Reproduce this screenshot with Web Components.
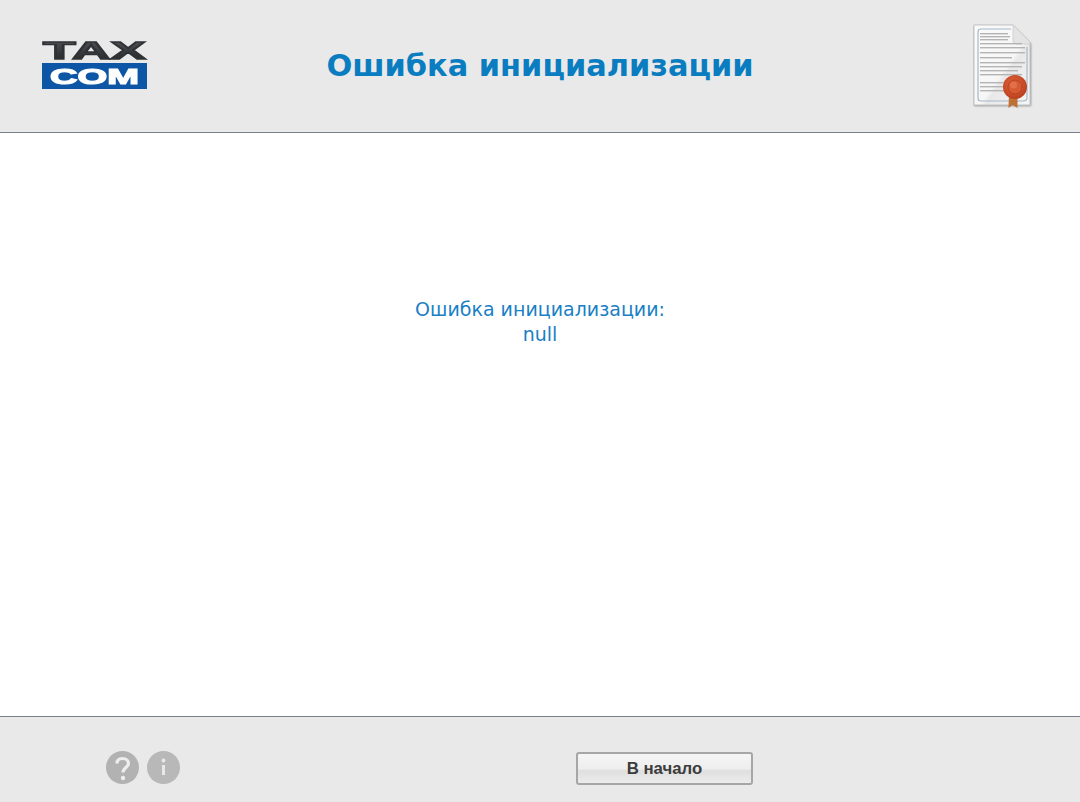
<!DOCTYPE html>
<html lang="ru">
<head>
<meta charset="utf-8">
<title>Ошибка инициализации</title>
<style>
html, body { margin: 0; height: 100%; }
body { font-family: "DejaVu Sans", sans-serif; }
</style>
</head>
<body>
<app-screen>
  <tax-logo slot="logo"></tax-logo>
  <span slot="title">Ошибка инициализации</span>
  <cert-icon slot="icon"></cert-icon>
  <span>Ошибка инициализации:<br>null</span>
  <help-icons slot="tools"></help-icons>
  <nav-button slot="action">В начало</nav-button>
</app-screen>

<script>
const screen_template = document.createElement('template');
screen_template.innerHTML = `
<style>
:host{
  display: flex;
  flex-direction: column;
  height: 802px;
  width: 1080px;
  background: #fff;
}
header{
  height: 132px;
  flex: none;
  background: #e9e9e9;
  border-bottom: 1px solid #77808c;
  display: grid;
  grid-template-columns: 1fr auto 1fr;
  align-items: center;
}
#logo{ padding-left: 42px; display: flex; }
#title{
  font: bold 30.4px "DejaVu Sans", sans-serif;
  color: #0a7dc1;
  position: relative;
  top: -1px;
}
#icon{ justify-self: end; padding-right: 47px; display: flex; }
main{
  flex: 1;
  display: flex;
  align-items: center;
  justify-content: center;
  text-align: center;
  font: 19px/25px "DejaVu Sans", sans-serif;
  color: #1a80c4;
  padding-bottom: 205px;
}
footer{
  height: 85px;
  flex: none;
  box-sizing: content-box;
  background: #e9e9e9;
  border-top: 1px solid #77808c;
  display: flex;
  align-items: center;
  padding-left: 106px;
}
#tools{ display: flex; padding-top: 16px; }
#action{ margin-left: 396px; display: flex; padding-top: 18px; }
</style>
<header>
  <div id="logo"><slot name="logo"></slot></div>
  <div id="title"><slot name="title"></slot></div>
  <div id="icon"><slot name="icon"></slot></div>
</header>
<main><slot></slot></main>
<footer>
  <div id="tools"><slot name="tools"></slot></div>
  <div id="action"><slot name="action"></slot></div>
</footer>`;

class AppScreen extends HTMLElement{
  constructor(){
    super();
    this.attachShadow({mode:"open"});
    this.shadowRoot.appendChild(screen_template.content.cloneNode(true));
  }
}

const logo_template = document.createElement('template');
logo_template.innerHTML = `
<style>
:host{ display: block; width: 106px; height: 62px; }
svg{ display: block; }
text{ font-family: "Liberation Sans", sans-serif; font-weight: bold; }
</style>
<svg width="106" height="62" viewBox="0 -6 106 62">
  <defs>
    <linearGradient id="tax" x1="0" y1="0" x2="0" y2="1">
      <stop offset="0" stop-color="#55585c"/>
      <stop offset="1" stop-color="#222427"/>
    </linearGradient>
    <filter id="soft"><feGaussianBlur stdDeviation="0.45"/></filter>
  </defs>
  <g filter="url(#soft)">
    <text x="1" y="17.500" font-size="24.500" textLength="103" lengthAdjust="spacingAndGlyphs" fill="url(#tax)" stroke="#2f3235" stroke-width="1.300">TAX</text>
    <rect x="0" y="22" width="105" height="26" fill="#0a56a6"/>
    <text x="8" y="43" font-size="22" textLength="89" lengthAdjust="spacingAndGlyphs" fill="#fff" stroke="#fff" stroke-width="1.200">COM</text>
  </g>
</svg>`;

class TaxLogo extends HTMLElement{
  constructor(){
    super();
    this.attachShadow({mode:"open"});
    this.shadowRoot.appendChild(logo_template.content.cloneNode(true));
  }
}

const cert_template = document.createElement('template');
cert_template.innerHTML = `
<style>
:host{ display: block; width: 60px; height: 88px; }
svg{ display: block; }
</style>
<svg width="60" height="88" viewBox="-1 -3 60 88">
  <defs>
    <filter id="soft" x="-10%" y="-10%" width="120%" height="120%"><feGaussianBlur stdDeviation="0.5"/></filter>
    <filter id="shade" x="-10%" y="-10%" width="120%" height="120%"><feGaussianBlur stdDeviation="1.1"/></filter>
    <linearGradient id="paper" x1="0" y1="0" x2="1" y2="1">
      <stop offset="0" stop-color="#fbfbfb"/>
      <stop offset=".55" stop-color="#f6f6f6"/>
      <stop offset=".6" stop-color="#e8e8e8"/>
      <stop offset="1" stop-color="#f6f6f6"/>
    </linearGradient>
    <radialGradient id="seal" cx=".45" cy=".4" r=".6">
      <stop offset="0" stop-color="#e06a42"/>
      <stop offset=".7" stop-color="#c94c28"/>
      <stop offset="1" stop-color="#b84020"/>
    </radialGradient>
  </defs>
  <path d="M0 1 H39 L57 19 V81 H0 Z" fill="#8f8f8f" filter="url(#shade)"/>
  <g filter="url(#soft)">
    <path d="M0 0 H39 L56 17 V80 H0 Z" fill="url(#paper)" stroke="#c0c3c6"/>
    <path d="M37 4 H7 Q4 4 4 7 V73 Q4 76 7 76 H49 Q53 76 53 73 V22" fill="none" stroke="#a6b8c8" stroke-width="1.2"/>
    <path d="M39 0 L56 17 V19 H43 Q39 19 39 15 Z" fill="#e4e4e4" stroke="#cbcbcb" stroke-width=".8"/>
    <g fill="#b4b4b4">
      <rect x="6" y="8" width="28" height="1.400"/>
      <rect x="6" y="11" width="30" height="1.400"/>
      <rect x="6" y="14" width="28" height="1.400"/>
      <rect x="6" y="18" width="42" height="1.400"/>
      <rect x="6" y="22" width="45" height="1.400"/>
      <rect x="6" y="27" width="45" height="1.400"/>
      <rect x="6" y="32" width="32" height="1.400"/>
      <rect x="6" y="37" width="45" height="1.400"/>
      <rect x="6" y="41" width="42" height="1.400"/>
      <rect x="6" y="45" width="38" height="1.400"/>
      <rect x="6" y="49" width="42" height="1.400"/>
      <rect x="6" y="57" width="45" height="1.400"/>
      <rect x="6" y="61" width="28" height="1.400"/>
      <rect x="6" y="65" width="26" height="1.400"/>
    </g>
    <path d="M35 68 L34.500 83 L38.500 80 L43.500 83 L43.500 68 Z" fill="#bf6f36"/>
    <circle cx="41" cy="62" r="12" fill="url(#seal)"/>
    <circle cx="41" cy="62" r="7" fill="#d65a33" stroke="#b8431f"/>
    <circle cx="39.500" cy="60" r="3.500" fill="#e97f5c" opacity=".6"/>
  </g>
</svg>`;

class CertIcon extends HTMLElement{
  constructor(){
    super();
    this.attachShadow({mode:"open"});
    this.shadowRoot.appendChild(cert_template.content.cloneNode(true));
  }
}

const help_template = document.createElement('template');
help_template.innerHTML = `
<style>
:host{ display: flex; gap: 8px; }
svg{ display: block; }
</style>
<svg width="33" height="33" viewBox="0 0 33 33" role="img" aria-label="help">
  <defs><filter id="soft"><feGaussianBlur stdDeviation="0.4"/></filter></defs>
  <circle cx="16.500" cy="16.500" r="16.500" fill="#b2b2b2"/>
  <g filter="url(#soft)">
    <path d="M11 12.500 C11 9 13.500 7.500 16.500 7.500 C20 7.500 22.500 9.500 22.500 12.500 C22.500 16.500 17 16.500 17 21.500" fill="none" stroke="#eeeeee" stroke-width="3.200"/>
    <circle cx="17" cy="27" r="2.200" fill="#eeeeee"/>
  </g>
</svg>
<svg width="33" height="33" viewBox="0 0 33 33" role="img" aria-label="info">
  <circle cx="16.500" cy="16.500" r="16.500" fill="#b8b8b8"/>
  <g filter="url(#soft)">
    <circle cx="16.500" cy="9.500" r="1.900" fill="#e8e8e8"/>
    <path d="M16.500 14 V24" stroke="#e8e8e8" stroke-width="3"/>
  </g>
</svg>`;

class HelpIcons extends HTMLElement{
  constructor(){
    super();
    this.attachShadow({mode:"open"});
    this.shadowRoot.appendChild(help_template.content.cloneNode(true));
  }
}

const button_template = document.createElement('template');
button_template.innerHTML = `
<style>
:host{ display: block; }
button{
  display: block;
  width: 177px;
  height: 33px;
  box-sizing: border-box;
  padding: 0;
  border: 2px solid #a6a6a6;
  border-radius: 3px;
  background: linear-gradient(#f5f5f5 0%, #eeeeee 50%, #dfdfdf 58%, #ececec 100%);
  color: #3c3c3c;
  font: bold 16.800px "Liberation Sans", sans-serif;
}
</style>
<button type="button"><slot></slot></button>`;

class NavButton extends HTMLElement{
  constructor(){
    super();
    this.attachShadow({mode:"open"});
    this.shadowRoot.appendChild(button_template.content.cloneNode(true));
  }
}

customElements.define("app-screen", AppScreen);
customElements.define("tax-logo", TaxLogo);
customElements.define("cert-icon", CertIcon);
customElements.define("help-icons", HelpIcons);
customElements.define("nav-button", NavButton);
</script>
</body>
</html>
